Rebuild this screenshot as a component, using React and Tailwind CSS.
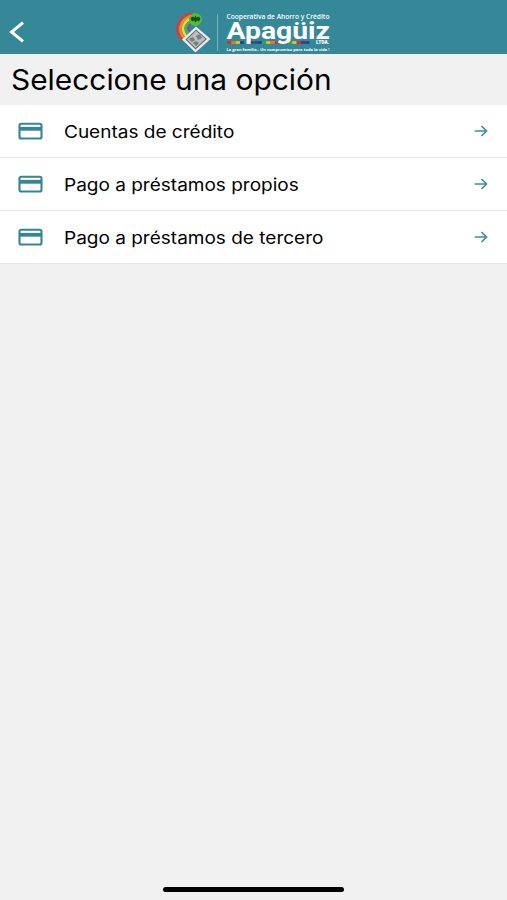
const options = ['Cuentas de crédito', 'Pago a préstamos propios', 'Pago a préstamos de tercero'];

const bandColors = ['#e02b24', '#e8792b', '#f1c40f', '#22408f', '#358898', '#5b2a86', '#24509a', '#22408f', '#38a34a', '#f0c419', '#e8792b', '#d93025', '#5b2a86', '#273f93', '#38a34a', '#f0c419', '#d93025', '#5b2a86', '#22408f', '#358898'];

function CardIcon() {
  return (
    <svg width="25" height="18" viewBox="0 0 25 18" className="ml-[18px] shrink-0" fill="none">
      <rect x="1.500" y="1.700" width="22" height="14.800" rx="1.800" stroke="#358596" strokeWidth="2.100" />
      <path d="M1.500 6.800h22" stroke="#358596" strokeWidth="3.800" />
    </svg>
  );
}

function ArrowIcon() {
  return (
    <svg width="14" height="12" viewBox="0 0 14 12" className="mr-[19px] ml-auto shrink-0" fill="none" stroke="#418b9b" strokeWidth="1.700" strokeLinecap="round" strokeLinejoin="round">
      <path d="M1.400 6h11M8 1.500 12.600 6 8 10.500" />
    </svg>
  );
}

function Logo() {
  return (
    <svg width="156" height="46" viewBox="175 10 156 46" className="ml-[150px] mt-[10px] shrink-0 self-start" fontFamily="'Open Sans', 'Noto Sans', sans-serif" fill="#fff">
      <g fill="none" strokeWidth="2.500">
        <path d="M193 14C180 14 172 28 182 40" stroke="#dc3b35" />
        <path d="M193 15.500C182 18 176 28 184 38" stroke="#ed8a2c" />
        <path d="M192 18C184 21 180 28 186 36" stroke="#f2d632" />
        <path d="M191 21C186 24 184 29 188 33.500" stroke="#4caf50" />
        <path d="M191 24C188 26 187.500 29 190 31.500" stroke="#7b50a4" strokeWidth="2" />
      </g>
      <circle cx="195.400" cy="19.500" r="6.500" fill="#55bd32" />
      <path d="M190.500 18.500c1-2 2.500-2 4-1l1-2 1 2c1.500-1 3-1 4 1l-1.500 3-2-1-1.500 2-1.500-2-2 1z" fill="#174d27" />
      <path d="M196 26.500 210.500 39 195.500 52.500 182 39.500z" fill="#ececec" />
      <path d="M196 29.500 207 39 195.500 49.500 185.500 39.500z" fill="#646a6c" />
      <path d="M196 30.800 205.500 39 195.500 48 187 39.500z" fill="#b9bdbd" />
      <path d="m189 39 4-2 2 3-3 2zM196 36l4-2 2 4-4 2zM193 43l3-2 3 2-3 3z" fill="#777e80" />
      <path d="M217.500 14v37" stroke="#78afba" strokeWidth="1" />
      <text x="226.500" y="18.800" fontSize="6.800" fontWeight="600" textLength="103" lengthAdjust="spacingAndGlyphs">Cooperativa de Ahorro y Crédito</text>
      {bandColors.map((color, i) => (
        <rect key={i} x={227 + i * 4.35} y="41.200" width="4.400" height="2.600" fill={color} />
      ))}
      <text x="226.500" y="39.300" fontFamily="Roboto, sans-serif" fontSize="24" fontWeight="700" textLength="103.500" lengthAdjust="spacingAndGlyphs">Apagüiz</text>
      <text x="316" y="44.300" fontSize="4.600" fontWeight="800" textLength="13" lengthAdjust="spacingAndGlyphs">LTDA.</text>
      <text x="226.500" y="51.300" fontSize="4" fontWeight="700" textLength="103" lengthAdjust="spacingAndGlyphs">La gran familia.. Un compromiso para toda la vida !</text>
    </svg>
  );
}

export default function App() {
  return (
    <div className="flex h-[900px] w-full flex-col overflow-hidden bg-[#f1f1f1] font-['Inter','Liberation_Sans',sans-serif] text-black">
      <header className="flex h-[54px] shrink-0 items-center bg-[#358898]">
        <svg width="16" height="24" viewBox="0 0 16 24" className="ml-[9px] mt-[9px] shrink-0" fill="none" stroke="#fff" strokeWidth="3">
          <path d="M14 2.600 2.500 12 14 21.400" />
        </svg>
        <Logo />
      </header>
      <h1 className="flex h-[51px] shrink-0 items-center pl-[11px] text-[28px]">
        <span className="origin-left scale-x-[1.067] whitespace-nowrap">Seleccione una opción</span>
      </h1>
      <ul className="shrink-0 bg-white">
        {options.map((label) => (
          <li key={label} className="flex h-[53px] items-center border-b border-[#e6e6e6]">
            <CardIcon />
            <span className="mt-[3px] ml-[21px] origin-left scale-x-[1.118] text-[17px] whitespace-nowrap">{label}</span>
            <ArrowIcon />
          </li>
        ))}
      </ul>
      <div className="mx-auto mt-auto mb-[8px] h-[5px] w-[181px] shrink-0 rounded-full bg-black" />
    </div>
  );
}
